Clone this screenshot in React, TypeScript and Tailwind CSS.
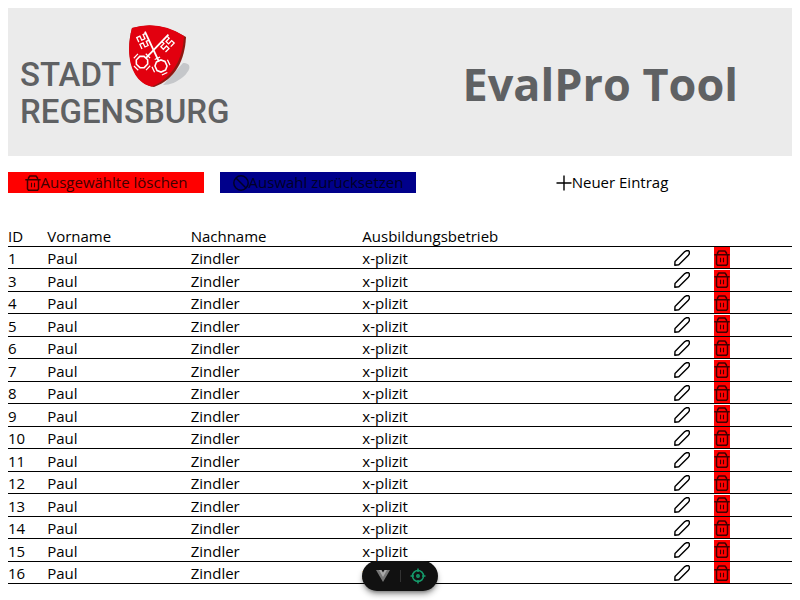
import React from "react";

const ids = [1, 3, 4, 5, 6, 7, 8, 9, 10, 11, 12, 13, 14, 15, 16];

function TrashIcon() {
  return (
    <svg viewBox="0 0 16 16" className="size-4 shrink-0" fill="none" stroke="currentColor" strokeWidth="1.5" strokeLinejoin="round" aria-hidden="true">
      <path d="M0.300 4.700H15.700M3.500 4.700V3L4.800 1H11L12.500 3V4.700M2.500 4.700V14L3.500 15.200H12.500L13.500 14V4.700" />
      <path d="M6.500 7.800V12.200M9.500 7.800V12.200" strokeWidth="1.1" />
    </svg>
  );
}

function BanIcon() {
  return (
    <svg viewBox="0 0 16 16" className="size-4 shrink-0" fill="none" stroke="currentColor" strokeWidth="1.5" aria-hidden="true">
      <circle cx="8" cy="8" r="7.2" />
      <path d="M3 3L13 13" />
    </svg>
  );
}

function PlusIcon() {
  return (
    <svg viewBox="0 0 16 16" className="size-4 shrink-0" fill="none" stroke="currentColor" strokeWidth="1.4" aria-hidden="true">
      <path d="M8 0.5V15.5M0.5 8H15.5" />
    </svg>
  );
}

function PencilIcon() {
  return (
    <svg viewBox="0 0 16 16" className="size-4" fill="none" stroke="currentColor" strokeWidth="1.4" strokeLinejoin="round" aria-hidden="true">
      <path d="M0.8 15.2L1 11.400L10.800 1.600L12.200 0.800H14.600L15.300 1.600V3.800L14.400 5.200L4.800 14.800Z" />
    </svg>
  );
}

function Key() {
  return (
    <g fill="none" stroke="#fff">
      <path d="M0 -38V-5.500" strokeWidth="1.8" />
      <path d="M0 -36H-3V-31.500H-6.500V-36H-10V-31M0 -28.500H-3V-24H-6.500V-28.500H-10V-23.500" strokeWidth="1.3" />
      <path d="M-2.500 -5.500H2.500L5.500 -2.500V2.500L2.500 5.500H-2.500L-5.500 2.500V-2.500Z" strokeWidth="1.6" />
      <path d="M-3 -8.500H3M-3 8.500H3M-8.500 -3V3M8.500 -3V3" strokeWidth="1.2" />
    </g>
  );
}

function Crest() {
  return (
    <svg viewBox="0 0 64 64" className="size-16 shrink-0" aria-hidden="true">
      <path d="M55 39C64 39 63 46 55 53C49 58 42 61 35 61Z" fill="#c5c7ca" />
      <path d="M4 4Q31 -4 58 13C57 35 48 55 26 63C6 60 -4 34 4 4Z" fill="#8d1912" />
      <path d="M4 4Q31 -4 56 12C55 34 45 54 24 62.500C5 59 -4 34 4 4Z" fill="#e2000f" />
      <g transform="translate(33 42) rotate(-25)">
        <Key />
      </g>
      <g transform="translate(14 38) rotate(44) scale(-1 1)">
        <Key />
      </g>
    </svg>
  );
}

export default function App() {
  return (
    <div className="flex h-screen flex-col overflow-hidden bg-white p-2 font-['Open_Sans','Noto_Sans',sans-serif] text-[15px] leading-[21px] text-black">
      <header className="flex h-[148px] shrink-0 items-start justify-between bg-[#ebebeb] pt-4 pr-[54px] pl-3 text-[#5f6163]">
        <div className="grid font-['Roboto',sans-serif] text-[33px] leading-[37px] font-medium">
          <div className="flex items-end">
            <span className="w-[108px]">STADT</span>
            <div className="mb-[5px]">
              <Crest />
            </div>
          </div>
          <span>REGENSBURG</span>
        </div>
        <h1 className="self-center pb-3 text-[45px] leading-[50px] font-bold">EvalPro Tool</h1>
      </header>

      <div className="mt-4 flex shrink-0 gap-4">
        <button className="flex w-[196px] items-center justify-center bg-[#ff0000] text-[#400000]">
          <TrashIcon />
          Ausgewählte löschen
        </button>
        <button className="flex w-[196px] items-center justify-center bg-[#00008b] text-[#000026]">
          <BanIcon />
          Auswahl zurücksetzen
        </button>
        <button className="mx-auto flex items-center justify-center">
          <PlusIcon />
          Neuer Eintrag
        </button>
      </div>

      <table className="mt-8 w-full table-fixed border-collapse text-left leading-[19px]">
        <colgroup>
          <col className="w-[5%]" />
          <col className="w-[18.3%]" />
          <col className="w-[21.9%]" />
          <col />
          <col className="w-10" />
          <col className="w-[78px]" />
        </colgroup>
        <thead>
          <tr className="h-[21px] border-b border-black">
            <th className="p-0 pt-0.5 font-normal">ID</th>
            <th className="p-0 pt-0.5 font-normal">Vorname</th>
            <th className="p-0 pt-0.5 font-normal">Nachname</th>
            <th className="p-0 pt-0.5 font-normal">Ausbildungsbetrieb</th>
            <td className="p-0" />
            <td className="p-0" />
          </tr>
        </thead>
        <tbody>
          {ids.map((id) => (
            <tr key={id} className="border-b border-black odd:h-[22px] even:h-[23px]">
              <td className="p-0 pt-0.5">{id}</td>
              <td className="p-0 pt-0.5">Paul</td>
              <td className="p-0 pt-0.5">Zindler</td>
              <td className="p-0 pt-0.5">x-plizit</td>
              <td className="p-0">
                <button aria-label="Bearbeiten" className="block">
                  <PencilIcon />
                </button>
              </td>
              <td className="p-0">
                <button aria-label="Löschen" className="flex h-[21px] items-center bg-[#ff0000] text-[#400000]">
                  <TrashIcon />
                </button>
              </td>
            </tr>
          ))}
        </tbody>
      </table>

      <div className="fixed bottom-[9px] left-1/2 flex h-[30px] w-[76px] -translate-x-1/2 items-center justify-center gap-[9px] rounded-full bg-[#111] shadow-md shadow-black/40">
        <button aria-label="Vue DevTools">
          <svg viewBox="0 0 16 16" className="size-4" aria-hidden="true">
            <path d="M1 2H5L8 7L11 2H15L8 14Z" fill="#777" />
            <path d="M4 2H6.5L8 4.5L9.500 2H12L8 9Z" fill="#aaa" />
          </svg>
        </button>
        <span className="h-3 w-px bg-[#333]" />
        <button aria-label="Inspector" className="text-[#159b6b]">
          <svg viewBox="0 0 16 16" className="size-4" fill="none" stroke="currentColor" strokeWidth="1.5" aria-hidden="true">
            <circle cx="8" cy="8" r="5.500" />
            <circle cx="8" cy="8" r="1.200" />
            <path d="M8 0.5V4M8 12V15.5M0.5 8H4M12 8H15.5" />
          </svg>
        </button>
      </div>
    </div>
  );
}
